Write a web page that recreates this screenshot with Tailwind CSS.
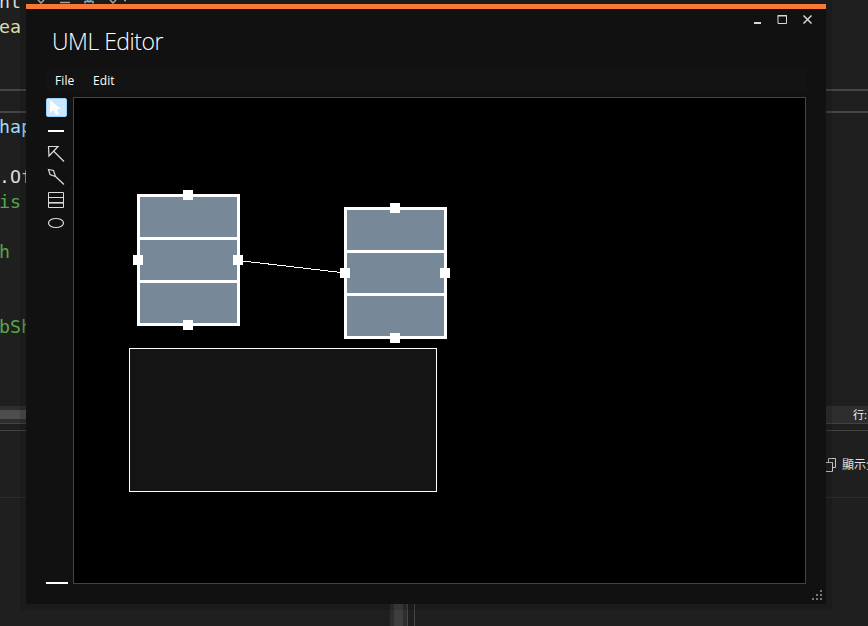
<!DOCTYPE html>
<html lang="en">
<head>
<meta charset="utf-8">
<title>UML Editor</title>
<script src="https://cdn.jsdelivr.net/npm/@tailwindcss/browser@4"></script>
</head>
<body class="relative h-[626px] w-[868px] overflow-hidden bg-[#1f1f1f] font-['Open_Sans','Noto_Sans_CJK_TC',sans-serif]">
<!-- code editor behind the window -->
<div class="absolute inset-0 flex flex-col">
  <div class="h-[89px]"></div>
  <div class="h-[24px] border-y-2 border-[#464646]"></div>
  <div class="h-[293px]"></div>
  <div class="flex h-[18px] items-center justify-between border-b border-[#434343] bg-[#2e2e2e]">
    <div class="-mt-px h-[9px] w-[200px] bg-[#4d4d4d]"></div>
    <div class="w-[15px] overflow-hidden text-[11px] leading-4 whitespace-nowrap text-[#f0f0f0]">行: 1</div>
  </div>
  <div class="h-[6px]"></div>
  <div class="flex h-[68px] items-center justify-end border-y border-t-[#434343] border-b-[#2d2d2d]">
    <svg class="mt-[2px] mr-px h-[16px] w-[16px]" viewBox="0 0 16 16" fill="none" stroke="#c4c4c4"><path d="M.5 5.5H7.5V14.5H.5Z"/><path d="M3.5 5V1.5H10.5V10.5H8"/></svg>
    <div class="mt-[2px] w-[26px] overflow-hidden text-[12px] leading-4 whitespace-nowrap text-[#e0e0e0]">顯示全部</div>
  </div>
  <div class="flex flex-1 pl-[390px]">
    <div class="w-[18px] border-r border-[#464646] bg-[#2e2e2e] px-[4px]"><div class="h-full w-[9px] bg-[#3e3e3e]"></div></div>
    <div class="w-[7px] border-r border-[#464646]"></div>
  </div>
</div>
<div class="absolute top-0 left-0 h-[400px] w-[160px] overflow-hidden font-['DejaVu_Sans_Mono',monospace] text-[18.3px] leading-[25px] whitespace-pre text-[#dcdcdc]">
  <div class="absolute -top-[11px] -left-px">nt</div>
  <div class="absolute top-[14px] -left-px text-[#dcdcaa]">ea</div>
  <div class="absolute top-[114px] -left-px text-[#9cdcfe]">hape</div>
  <div class="absolute top-[164px] -left-px">.Of</div>
  <div class="absolute top-[189px] -left-px text-[#57a64a]">is</div>
  <div class="absolute top-[239px] -left-px text-[#57a64a]">h</div>
  <div class="absolute top-[314px] -left-px text-[#57a64a]">bSh</div>
  <svg class="absolute top-0 left-[34px] h-[4px] w-[100px]" viewBox="0 0 100 4" fill="none" stroke="#b8b8b8" stroke-width="1.5"><path d="M4 0L7 3L10 0M26 2.5H36M76 0L79 3L82 0M90 .5h2"/><path stroke="#83c8e8" d="M51 3.5V1.5H59V3.5M53 0L55 2L57 0"/></svg>
</div>

<!-- application window -->
<div class="absolute top-[4px] left-[26px] flex h-[600px] w-[800px] flex-col border-t-[5px] border-[#f77935] bg-[#111111] shadow-[0_0_0_6px_rgb(0_0_0/0.13)]">
  <header class="flex h-[60px] justify-between pl-[26px]">
    <h1 class="pt-[15px] text-[23px] leading-[34px] font-light tracking-[-0.5px] text-white">UML Editor</h1>
    <svg class="mt-[4px] mr-[12px] h-[14px] w-[62px]" viewBox="0 0 62 14" fill="none" stroke="#d8d8d8"><path stroke-width="2" d="M2 10H9"/><path d="M26 2.5H34.5V10.5H26ZM25.5 3H35"/><path stroke-width="1.5" d="M51.5 2.5L59.5 10.5M59.5 2.5L51.5 10.5"/></svg>
  </header>
  <nav class="mx-[20px] flex h-[23px] items-center gap-[19px] bg-[#131313] pl-[9px] text-[12px] leading-4 tracking-[0.1px] text-white">
    <span class="w-[19px]">File</span><span>Edit</span>
  </nav>
  <div class="mt-[5px] ml-[20px] flex h-[487px]">
    <aside class="flex w-[27px] flex-col pt-px">
      <div class="h-[19px] w-[21px] rounded-[2px] border border-[#99d1ff] bg-[#cce8ff]">
        <svg class="h-[17px] w-[19px]" viewBox="0 0 19 17" fill="#fff"><path d="M3 1V14L6.5 11L9 16L12 15L9.8 10H14Z"/></svg>
      </div>
      <svg class="mt-[5px] h-[110px] w-[22px]" viewBox="0 0 22 110" fill="none" stroke="#dcdcdc" stroke-width="1.2">
        <path stroke="#fff" stroke-width="2" d="M2 9H18"/>
        <path d="M2.5 24.5H12L3 34ZM8 29.5L18 39.5"/>
        <path d="M2.5 47.5L7.5 48.5L9.5 54.5L4 52.5ZM9.5 54.5L18 62.5"/>
        <path stroke-width="1" d="M2.5 70.5H17.5V85.5H2.5Z"/><path stroke-width="1" d="M3 75.5H17M3 80.5H17"/><path stroke="#888" stroke-width="1" d="M3 81.5H17"/>
        <ellipse cx="10" cy="101" rx="7.5" ry="4.5"/>
      </svg>
      <div class="mt-auto h-[2px] w-[22px] bg-white"></div>
    </aside>
    <main class="h-[487px] w-[733px] border border-[#434343] bg-black">
      <!-- diagram in canvas coordinates -->
      <svg class="block h-[485px] w-[731px]" viewBox="74 98 731 485" shape-rendering="crispEdges">
        <defs>
          <g id="cls">
            <rect x="1.5" y="1.5" width="100" height="129" fill="#778899" stroke="#fff" stroke-width="3"/>
            <path d="M0 44.5H103M0 87.5H103" stroke="#fff" stroke-width="3"/>
            <path d="M46 -4h10v10h-10zM-4 61h10v10h-10zM96 61h10v10h-10zM46 126h10v10h-10z" fill="#fff"/>
          </g>
        </defs>
        <rect x="129.5" y="348.5" width="307" height="143" fill="#141414" stroke="#fff"/>
        <path d="M238.5 260.5L345.5 273" stroke="#fff"/>
        <use href="#cls" x="137" y="194"/>
        <use href="#cls" x="344" y="207"/>
      </svg>
    </main>
  </div>
  <svg class="mt-[5px] ml-[786px] h-[12px] w-[12px] shrink-0" viewBox="0 0 12 12" fill="#777"><path d="M8 1h2v2h-2zM4 5h2v2h-2zM8 5h2v2h-2zM0 9h2v2h-2zM4 9h2v2h-2zM8 9h2v2h-2z"/></svg>
</div>
</body>
</html>
